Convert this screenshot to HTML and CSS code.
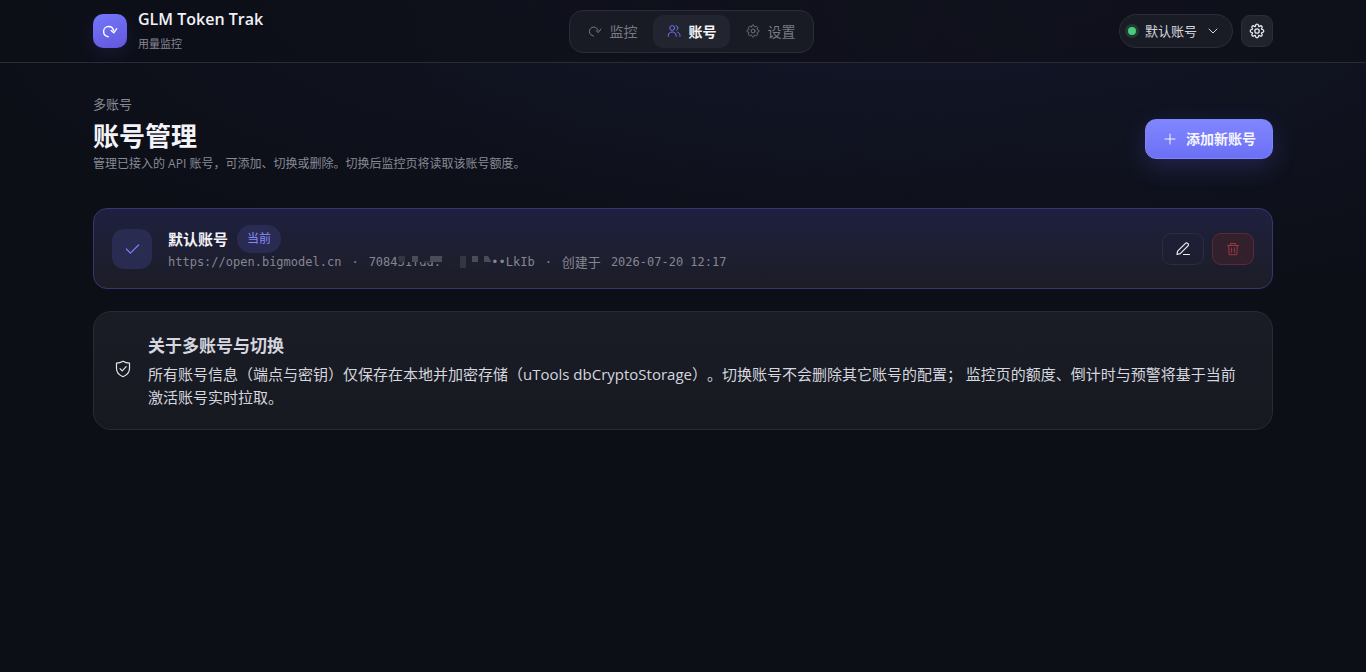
FILE: index.html
```html
<!DOCTYPE html>
<html lang="zh-CN">
<head>
<meta charset="utf-8">
<meta name="viewport" content="width=device-width, initial-scale=1">
<title>GLM Token Trak</title>
<link rel="stylesheet" href="styles.css">
</head>
<body>
<svg class="sprite" aria-hidden="true">
  <symbol id="i-spin" viewBox="0 0 14 14"><path d="M5.400 12C3.200 11.600 1.400 9.800 1.400 7.500 1.400 5 3.300 3.100 5.800 3.100c2.200 0 3.800 1.400 4.300 3.400"/><path d="M8 6.600l2.300 2L12.900 5"/></symbol>
  <symbol id="i-users" viewBox="0 0 14 14"><circle cx="5.200" cy="4" r="2.400"/><path d="M1.300 12.400v-1C1.300 9.400 3 8 5.200 8s3.900 1.400 3.900 3.400v1M9 1.700a2.400 2.400 0 0 1 .6 4.500M10.600 8.200c1.500.6 2.300 1.700 2.300 3.200v1"/></symbol>
  <symbol id="i-gear" viewBox="0 0 24 24"><path d="M9.600 4.600C9.800 2.700 10.600 1.800 12 1.800s2.200.9 2.400 2.800c.1.700.7.900 1.200.5 1.500-1.200 2.700-1.300 3.600-.3 1 .9.900 2.100-.3 3.600-.4.500-.2 1.100.5 1.200 1.900.2 2.800 1 2.800 2.400s-.9 2.200-2.800 2.400c-.7.100-.9.700-.5 1.200 1.200 1.500 1.300 2.700.3 3.600-.9 1-2.100.9-3.600-.3-.5-.4-1.100-.2-1.200.5-.2 1.900-1 2.800-2.400 2.800s-2.200-.9-2.400-2.800c-.1-.7-.7-.9-1.200-.5-1.500 1.200-2.700 1.300-3.600.3-1-.9-.9-2.100.3-3.600.4-.5.200-1.100-.5-1.200C2.700 14.200 1.800 13.400 1.800 12s.9-2.200 2.800-2.400c.7-.1.900-.7.5-1.200-1.200-1.500-1.300-2.700-.3-3.600.9-1 2.100-.9 3.600.3.500.4 1.100.2 1.200-.5z"/><circle cx="12" cy="12" r="3.300"/></symbol>
  <symbol id="i-check" viewBox="0 0 16 16"><path d="M2.400 8l4 4.200L14.600 4"/></symbol>
</svg>

<header class="topbar">
  <div class="container topbar-row">
    <div class="brand">
      <span class="logo"><svg class="icon icon-16"><use href="#i-spin"/></svg></span>
      <div>
        <div class="brand-name">GLM Token Trak</div>
        <div class="brand-sub">用量监控</div>
      </div>
    </div>
    <nav class="tabs">
      <button class="tab" type="button"><svg class="icon icon-14"><use href="#i-spin"/></svg>监控</button>
      <button class="tab active" type="button" aria-current="page"><svg class="icon icon-14"><use href="#i-users"/></svg>账号</button>
      <button class="tab" type="button"><svg class="icon icon-14 thin"><use href="#i-gear"/></svg>设置</button>
    </nav>
    <div class="tools">
      <button class="account-pill" type="button">
        <span class="status-dot"></span>默认账号
        <svg class="icon icon-10" viewBox="0 0 10 10"><path d="M1 3l4 4 4-4"/></svg>
      </button>
      <button class="gear-button" type="button" aria-label="设置"><svg class="icon icon-16 gear"><use href="#i-gear"/></svg></button>
    </div>
  </div>
</header>

<main class="container">
  <section class="page-head">
    <div class="page-copy">
      <div class="eyebrow">多账号</div>
      <h1>账号管理</h1>
      <p class="lead">管理已接入的 API 账号，可添加、切换或删除。切换后监控页将读取该账号额度。</p>
    </div>
    <button class="add-button" type="button">
      <svg class="icon icon-12" viewBox="0 0 12 12"><path d="M6 1v10M1 6h10"/></svg>添加新账号
    </button>
  </section>

  <article class="account-card">
    <span class="account-mark"><svg class="icon icon-16"><use href="#i-check"/></svg></span>
    <div class="account-body">
      <div class="account-title"><strong>默认账号</strong><span class="badge">当前</span></div>
      <div class="account-meta">
        <span>https://open.bigmodel.cn</span>
        <span>·</span>
        <span class="key"><span>708431fdd:</span><span>••LkIb</span>
          <svg class="mosaic" viewBox="0 0 94 14" aria-hidden="true">
            <path class="m-base" d="M0 0h92v6H0zM48 6h42v8H48z"/>
            <path class="m-dim" d="M0 0h6v6H0zM61 0h6v12h-6zM25 5h6v2h-6z"/>
            <path class="m-lit" d="M13 0h6v6h-6zM31 0h12v6H31zM73 0h6v6h-6zM85 0h4l3 5v1h-7z"/>
          </svg>
        </span>
        <span>·</span>
        <span class="created">创建于</span>
        <time datetime="2026-07-20T12:17">2026-07-20 12:17</time>
      </div>
    </div>
    <div class="account-actions">
      <button class="action" type="button" aria-label="编辑"><svg class="icon icon-16" viewBox="0 0 16 16"><path d="M2 13.500l.6-3.300 7.900-7.900c.6-.6 1.500-.6 2.100 0l.4.4c.6.6.6 1.500 0 2.100l-7.800 7.900zM8.500 13.500h6"/></svg></button>
      <button class="action danger" type="button" aria-label="删除"><svg class="icon icon-14" viewBox="0 0 14 14"><path d="M1.500 3.500h11M4.500 3.200V1.500h5v1.700M2.700 3.700l.5 9h7.600l.5-9M5.600 6v4.500M8.400 6v4.500"/></svg></button>
    </div>
  </article>

  <aside class="info-card">
    <svg class="icon icon-18" viewBox="0 0 18 18"><path d="M9 1.200c2 1.200 4 1.800 6.500 1.900v5.500c0 3.800-2.500 6.500-6.500 8.100-4-1.600-6.500-4.300-6.500-8.100V3.100C5 3 7 2.400 9 1.200zM6 8.600l2.200 2.300 4-4.200"/></svg>
    <div class="info-body">
      <h2>关于多账号与切换</h2>
      <p>所有账号信息（端点与密钥）仅保存在本地并加密存储（uTools dbCryptoStorage）。切换账号不会删除其它账号的配置； 监控页的额度、倒计时与预警将基于当前激活账号实时拉取。</p>
    </div>
  </aside>
</main>
</body>
</html>
```

FILE: styles.css
```css
* { box-sizing: border-box; }

body {
  margin: 0;
  min-height: 100vh;
  color: #d5d6df;
  font: 14px/20px "Open Sans", "Noto Sans CJK SC", sans-serif;
  text-spacing-trim: space-all;
  background:
    radial-gradient(900px 420px at 78% 0, rgba(99, 102, 241, 0.08), transparent 75%),
    radial-gradient(800px 360px at 38% 0, rgba(99, 102, 241, 0.05), transparent 75%),
    #0c0f16;
}

h1, h2, p { margin: 0; }

button {
  margin: 0;
  padding: 0;
  border: 1px solid transparent;
  background: none;
  color: inherit;
  font: inherit;
  cursor: pointer;
}

.sprite { display: none; }

.icon {
  flex: none;
  fill: none;
  stroke: currentColor;
  stroke-width: 1.2;
  stroke-linecap: round;
  stroke-linejoin: round;
}
.icon-10 { width: 10px; height: 10px; stroke-width: 1; }
.icon-12 { width: 12px; height: 12px; stroke-width: 1; }
.icon-14 { width: 14px; height: 14px; stroke-width: 1; }
.icon-16 { width: 16px; height: 16px; }
.icon-18 { width: 18px; height: 18px; }
.icon.thin { stroke-width: 1.6; }
.icon.gear { stroke-width: 2; }

.container {
  width: calc(100% - 48px);
  max-width: 1180px;
  margin: 0 auto;
}

.topbar {
  border-bottom: 1px solid #292b37;
  background: rgba(14, 15, 23, 0.72);
}
.topbar-row {
  display: flex;
  align-items: center;
  justify-content: space-between;
  min-height: 62px;
}

.brand { display: flex; align-items: center; gap: 11px; }
.logo {
  display: grid;
  place-items: center;
  width: 34px;
  height: 34px;
  border-radius: 10px;
  color: #fff;
  background: linear-gradient(160deg, #7478fb, #6256dd);
  box-shadow: 0 6px 18px rgba(99, 102, 241, 0.12);
}
.brand-name { color: #f1f1f6; font-size: 16px; font-weight: 600; line-height: 26px; }
.brand-sub { color: #858692; font-size: 11px; line-height: 24px; }

.tabs {
  display: flex;
  gap: 2px;
  padding: 4px;
  border: 1px solid #2a2c36;
  border-radius: 14px;
  background: #191b24;
}
.tab {
  display: flex;
  align-items: center;
  gap: 8px;
  padding: 6px 12px 6px 13px;
  border-radius: 10px;
  color: #777984;
  line-height: 19px;
}
.tab.active { color: #f4f4f8; font-weight: 700; background: #22242f; }
.tab.active .icon { color: #7376f5; }

.tools { display: flex; align-items: center; gap: 8px; }
.account-pill {
  display: flex;
  align-items: center;
  gap: 9px;
  height: 34px;
  padding: 0 14px 0 8px;
  border-color: #2b2d38;
  border-radius: 17px;
  background: #191c24;
  font-size: 13px;
}
.account-pill .icon { margin-left: 2px; }
.status-dot {
  width: 8px;
  height: 8px;
  border-radius: 50%;
  background: #4ccb7c;
  box-shadow: 0 0 0 3px #203b34;
}
.gear-button {
  display: grid;
  place-items: center;
  width: 32px;
  height: 32px;
  border-color: #2b2d38;
  border-radius: 9px;
  color: #e6e6ec;
  background: #20222c;
}

.page-head {
  display: flex;
  align-items: center;
  justify-content: space-between;
  gap: 24px;
  margin: 32px 0 25px;
}
.page-copy { padding-bottom: 8px; }
.eyebrow { color: #888a96; font-size: 13px; line-height: 18px; }
h1 { margin-top: 6px; color: #f3f3f8; font-size: 26px; font-weight: 700; line-height: 34px; }
.lead { color: #888a96; font-size: 12px; line-height: 22px; }
.add-button {
  display: flex;
  flex: none;
  align-items: center;
  gap: 10px;
  height: 40px;
  padding: 0 16px 0 18px;
  border-color: #7f84fb;
  border-radius: 11px;
  color: #f5f5ff;
  font-weight: 700;
  background: linear-gradient(#8086ff, #6c70f5);
  box-shadow: 0 8px 24px rgba(99, 102, 241, 0.22);
}

.account-card {
  display: flex;
  align-items: center;
  gap: 16px;
  padding: 16px 18px;
  border: 1px solid #35386f;
  border-radius: 14px;
  background: linear-gradient(#1f203f, #1c1d26);
}
.account-mark {
  display: grid;
  flex: none;
  place-items: center;
  width: 40px;
  height: 40px;
  border-radius: 12px;
  color: #7b80f7;
  background: #292b50;
}
.account-body { flex: 1; min-width: 0; }
.account-title { display: flex; align-items: center; gap: 9px; }
.account-title strong { color: #f2f2f7; font-size: 15px; font-weight: 700; }
.badge {
  padding: 0 10px;
  border-radius: 14px;
  color: #858afa;
  background: #292b53;
  font-size: 12px;
  line-height: 28px;
}
.account-meta {
  display: flex;
  flex-wrap: wrap;
  gap: 0 10px;
  color: #858692;
  font: 12px/19px "DejaVu Sans Mono", "Noto Sans CJK SC", monospace;
}
.account-meta .created { font-size: 13px; }
.key {
  position: relative;
  display: flex;
  justify-content: space-between;
  width: 166px;
}
.mosaic {
  position: absolute;
  top: 3px;
  left: 30px;
  width: 94px;
  height: 14px;
}
.m-base { fill: #1e1f2c; }
.m-dim { fill: #353642; }
.m-lit { fill: #4a4b58; }

.account-actions { display: flex; gap: 8px; }
.action {
  display: grid;
  place-items: center;
  width: 42px;
  height: 32px;
  border-color: #2b2d3a;
  border-radius: 9px;
  color: #ececf2;
}
.action.danger { border-color: #5c2a37; color: #9c3742; background: #33202d; }

.info-card {
  display: flex;
  align-items: center;
  gap: 16px;
  margin-top: 22px;
  padding: 20px 28px 20px 20px;
  border: 1px solid #292b34;
  border-radius: 18px;
  background: linear-gradient(#1b1d26, #161920);
}
.info-card > .icon { margin-bottom: 4px; color: #e4e4ea; }
.info-body { flex: 1; }
h2 { margin-bottom: 4px; font-size: 17px; font-weight: 700; line-height: 27px; }
.info-body p { font-size: 15px; line-height: 23px; }
```
